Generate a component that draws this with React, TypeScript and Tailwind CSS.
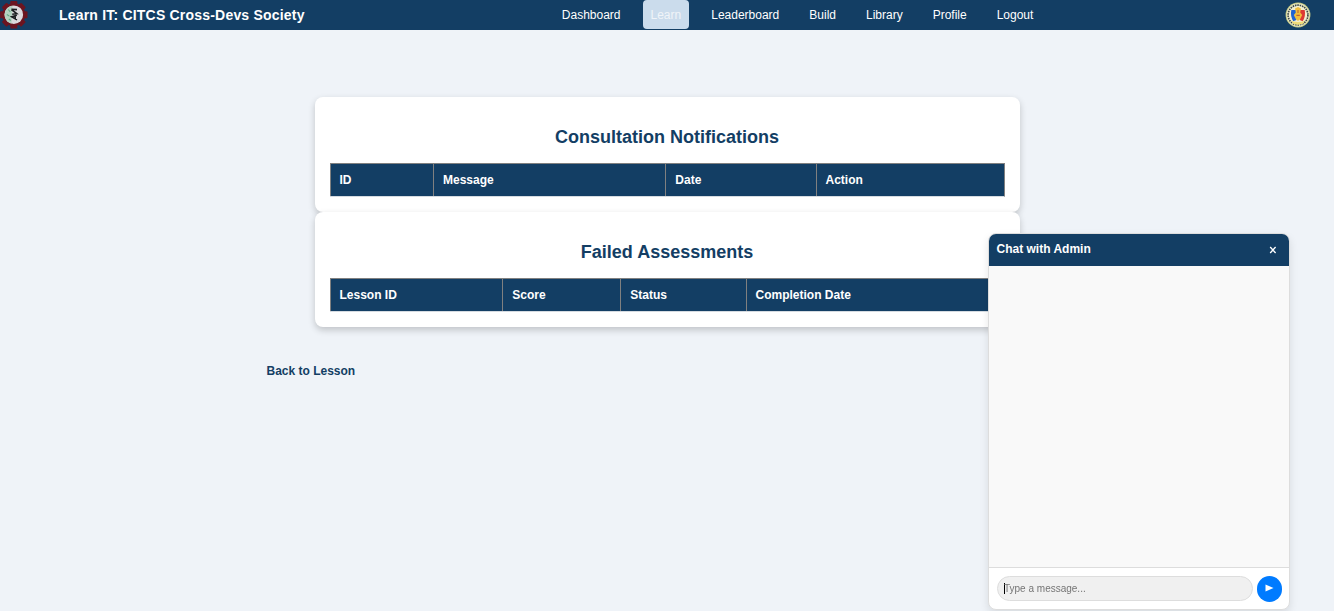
import React from "react";

function Gear() {
  return (
    <svg width="28" height="30" viewBox="0 0 28 30" className="block shrink-0">
      <g fill="#6b1520">
        {[0, 45, 90, 135, 180, 225, 270, 315].map((a) => (
          <rect key={a} x="10.3" y="1" width="7" height="6" rx="1" transform={`rotate(${a} 13.8 14.7)`} />
        ))}
        <circle cx="13.8" cy="14.7" r="11.5" />
      </g>
      <circle cx="13.8" cy="14.7" r="9.3" fill="#dcdadd" />
      <path d="M12.5 5.5a9.3 9.3 0 0 0-1 18.2z" fill="#b4d2c1" />
      <path d="M8.3 9.5l2 2.5M6.8 14.5l2.5 1.5M8.8 19l2 1.5" stroke="#62a987" strokeWidth="1.1" />
      <path d="M11.4 9.3l5.6 0.3M11.4 9.5l5.4 4.2-4.6 0.6M16.8 15.2l-5.2 1.5 5.4 3.2M15.2 16v3.2" stroke="#1b1e20" strokeWidth="1.6" fill="none" />
    </svg>
  );
}

function Seal() {
  return (
    <svg width="26" height="26" viewBox="0 0 26 26" className="block shrink-0">
      <circle cx="13" cy="13" r="12.4" fill="#c9cd86" />
      <circle cx="13" cy="13" r="11.4" fill="#f3f1d4" />
      <circle cx="13" cy="13" r="9.9" fill="none" stroke="#3f4a45" strokeWidth="1.7" strokeDasharray="1.6 0.8" />
      <circle cx="13" cy="13" r="8.6" fill="#f2edcd" />
      <path d="M6.3 8h5v10l-3 1.2q-3.2-5-2-11.2z" fill="#1e63d2" />
      <path d="M19.7 8h-5v10l3 1.2q3.2-5 2-11.2z" fill="#dd3a33" />
      <path d="M10 6.6l3-1.6 3 1.6-.8 4 2 2.4-2 4-2.2 2-2.2-2-2-4 2-2.4z" fill="#efbe3c" />
      <path d="M13 8v3M11.4 13.4h3.4" stroke="#c0632e" strokeWidth="1.1" fill="none" />
      <path d="M6.3 18.8q6.7 2.6 13.4 0l-1.7 3q-5 2-10 0z" fill="#f0dc7a" />
    </svg>
  );
}

const links = ["Dashboard", "Learn", "Leaderboard", "Build", "Library", "Profile", "Logout"];

type Column = { label: string; width: string };

function Panel({ title, columns }: { title: string; columns: Column[] }) {
  return (
    <section className="h-[115px] w-[705px] rounded-lg bg-white px-[15px] pt-[30px] shadow-[0_3px_7px_rgba(0,0,0,0.2)]">
      <h2 className="pr-px text-center text-[18px] leading-[21px] font-bold text-[#133e64]">{title}</h2>
      <div className="mt-[15px] flex h-[34px] w-[675px] border-t border-r border-b border-t-[#808080] border-r-[#808080] border-b-[#d5dbe1] bg-[#133e64]">
        {columns.map((c) => (
          <div key={c.label} className={`${c.width} border-l border-[#808080] text-[12px] leading-[32px] font-bold text-white`}>
            {c.label}
          </div>
        ))}
      </div>
    </section>
  );
}

export default function App() {
  return (
    <div className="h-[611px] overflow-hidden bg-[#eff3f8] font-['Liberation_Sans',Arial,sans-serif]">
      <header className="flex h-[30px] items-center bg-[#133e64] text-white">
        <Gear />
        <h1 className="ml-[31px] w-[495.3px] shrink-0 text-[14px] leading-[30px] font-bold tracking-[0.2px] whitespace-nowrap">
          Learn IT: CITCS Cross-Devs Society
        </h1>
        <nav className="flex h-[30px] gap-[15px] pb-px text-[12px]">
          {links.map((l) => (
            <a
              key={l}
              className={
                l === "Learn"
                  ? "rounded-[4px] bg-[#cbdcec] px-[7.5px] leading-[30px] text-[#f0f4f8]"
                  : "px-[7.5px] leading-[30px]"
              }
            >
              {l}
            </a>
          ))}
        </nav>
        <div className="mr-[23px] ml-auto">
          <Seal />
        </div>
      </header>
      <main className="flex flex-col pt-[67px] pl-[315px]">
        <Panel
          title="Consultation Notifications"
          columns={[
            { label: "ID", width: "w-[103px] pl-[8.5px]" },
            { label: "Message", width: "w-[232px] pl-[9px]" },
            { label: "Date", width: "w-[151px] pl-[9.3px]" },
            { label: "Action", width: "flex-1 pl-[8.5px]" },
          ]}
        />
        <Panel
          title="Failed Assessments"
          columns={[
            { label: "Lesson ID", width: "w-[172px] pl-[8.5px]" },
            { label: "Score", width: "w-[118px] pl-[9.3px]" },
            { label: "Status", width: "w-[126px] pl-[9.3px]" },
            { label: "Completion Date", width: "flex-1 pl-[8.5px]" },
          ]}
        />
        <a className="mt-[37px] -ml-[48.5px] text-[12px] leading-[14px] font-bold text-[#133e64]">Back to Lesson</a>
      </main>
      <aside className="fixed top-[233px] left-[988px] flex h-[377px] w-[302px] flex-col overflow-hidden rounded-[8px] border border-[#dddddd] bg-white shadow-[0_4px_8px_rgba(0,0,0,0.1)]">
        <div className="flex h-8 shrink-0 items-center justify-between bg-[#133e64] pr-[12px] pl-[7.5px] text-[12px] font-bold text-white">
          <span className="-mt-0.5">Chat with Admin</span>
          <svg width="8" height="8" viewBox="0 0 8 8" className="-mt-px block">
            <path d="M1.2 1l5.4 6M6.6 1L1.2 7" stroke="#fff" strokeWidth="1.3" />
          </svg>
        </div>
        <div className="flex-1 bg-[#f9f9f9]" />
        <div className="flex h-[42px] shrink-0 items-center border-t border-[#dddddd] pr-[7px] pl-2">
          <div className="flex h-[25px] w-[256px] items-center rounded-full border border-[#dddddd] bg-[#f0f0f0] pl-[6px] text-[10px] text-[#757575]">
            <span className="-mr-px h-[11px] w-px bg-black" />
            <span>Type a message...</span>
          </div>
          <button className="ml-1 flex h-[26px] w-[25px] items-center justify-center rounded-full bg-[#007bff]">
            <svg width="9" height="8" viewBox="0 0 9 8" className="-mt-px">
              <path d="M0.5 0.5L8.5 4L0.5 7.5Z" fill="#fff" />
            </svg>
          </button>
        </div>
      </aside>
    </div>
  );
}
